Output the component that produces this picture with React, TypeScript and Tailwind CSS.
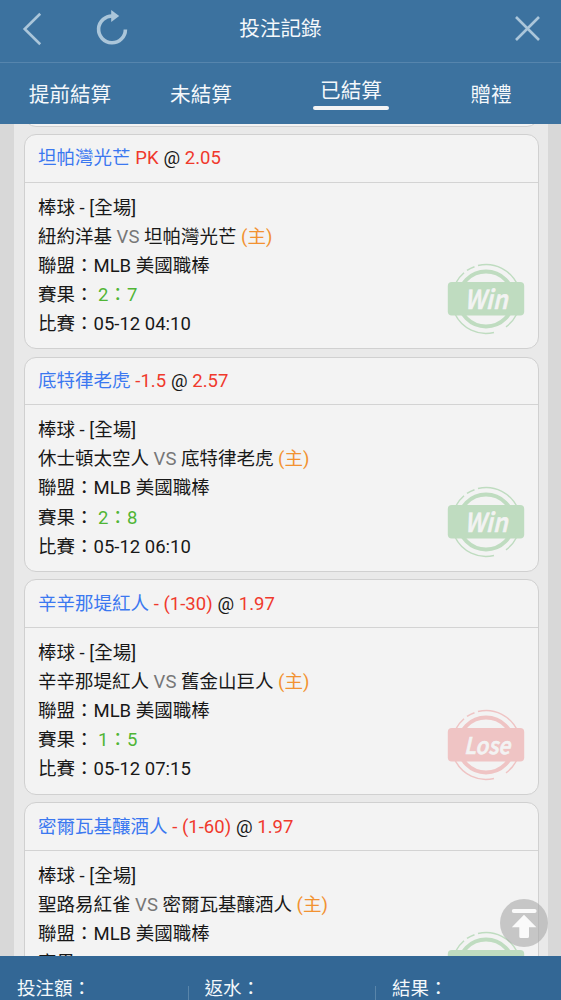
interface Bet {
  team: string;
  handicap: string;
  odds: string;
  away: string;
  home: string;
  score: string;
  time: string;
  result: "Win" | "Lose";
}

const bets: Bet[] = [
  {
    team: "坦帕灣光芒",
    handicap: "PK",
    odds: "2.05",
    away: "紐約洋基",
    home: "坦帕灣光芒",
    score: "2：7",
    time: "05-12 04:10",
    result: "Win",
  },
  {
    team: "底特律老虎",
    handicap: "-1.5",
    odds: "2.57",
    away: "休士頓太空人",
    home: "底特律老虎",
    score: "2：8",
    time: "05-12 06:10",
    result: "Win",
  },
  {
    team: "辛辛那堤紅人",
    handicap: "- (1-30)",
    odds: "1.97",
    away: "辛辛那堤紅人",
    home: "舊金山巨人",
    score: "1：5",
    time: "05-12 07:15",
    result: "Lose",
  },
  {
    team: "密爾瓦基釀酒人",
    handicap: "- (1-60)",
    odds: "1.97",
    away: "聖路易紅雀",
    home: "密爾瓦基釀酒人",
    score: "2：5",
    time: "05-12 07:40",
    result: "Win",
  },
];

const tabs = [
  { label: "提前結算", width: "w-[140px]" },
  { label: "未結算", width: "w-[122px]" },
  { label: "已結算", width: "w-[178px]" },
  { label: "贈禮", width: "w-[102px]" },
];

function Stamp({ result }: { result: Bet["result"] }) {
  const win = result === "Win";
  return (
    <svg
      width="78"
      height="72"
      viewBox="0 0 78 72"
      className={`absolute right-[13.5px] bottom-[13px] ${win ? "text-[#bfdcc0]" : "text-[#efc4c4]"}`}
    >
      <g fill="none" stroke="currentColor">
        <circle cx="39" cy="36" r="27.5" strokeWidth="4" />
        <g strokeWidth="1.5">
          <path d="M31 2.6A34.3 34.3 0 0 1 71 23" />
          <path d="M20 7.4A34.3 34.3 0 0 1 27.5 3.7" />
          <path d="M8.5 20.5A34.3 34.3 0 0 1 17 9.7" />
          <path d="M8 51A34.3 34.3 0 0 0 47 69.4" />
          <path d="M59 63.9A34.3 34.3 0 0 0 69.5 51.5" />
        </g>
      </g>
      <rect x="0.8" y="19" width="76.4" height="33.6" rx="4" fill="currentColor" />
      <text
        x={win ? 17.5 : 17}
        y={win ? 46 : 44.5}
        textLength={win ? 43 : 46}
        lengthAdjust="spacingAndGlyphs"
        className={`fill-[#f3f3f3] stroke-[#f3f3f3] stroke-[0.7px] font-['Noto_Sans_CJK_TC',sans-serif] font-medium italic ${win ? "text-[26px]" : "text-[23px]"}`}
      >
        {result}
      </text>
    </svg>
  );
}

function BetCard({ bet }: { bet: Bet }) {
  return (
    <div className="relative h-[215.2px] shrink-0 rounded-[12px] border border-[#d0d0d0] bg-[#f3f3f3]">
      <div className="flex h-[47.5px] items-center gap-[4.8px] border-b border-[#d3d3d3] pt-[2px] pl-[13.5px] whitespace-nowrap">
        <span className="text-[#3b78f0]">{bet.team}</span>
        <span className="text-[#f0392c]">{bet.handicap}</span>
        <span>@</span>
        <span className="text-[#f0392c]">{bet.odds}</span>
      </div>
      <div className="pt-[11px] pl-[13.5px] leading-[29.1px] whitespace-nowrap">
        <p>棒球 - [全場]</p>
        <p>
          {bet.away} <span className="text-[#777]">VS</span> {bet.home}{" "}
          <span className="text-[#f29231]">(主)</span>
        </p>
        <p>聯盟：MLB 美國職棒</p>
        <p>
          賽果： <span className="text-[#50b535]">{bet.score}</span>
        </p>
        <p>比賽：{bet.time}</p>
      </div>
      <Stamp result={bet.result} />
    </div>
  );
}

export default function App() {
  return (
    <div
      lang="zh-Hant"
      className="relative flex h-[1000px] w-[561px] flex-col overflow-hidden bg-[#d8d8d8] font-['Roboto','Noto_Sans_CJK_TC',sans-serif] text-[18.5px] text-[#181818]"
    >
      <header className="shrink-0 bg-[#3c729f] text-[20.6px] text-[#f4f8fb]">
        <div className="flex h-[63px] items-center justify-between border-b border-[#5685ad] pr-[20px] pb-[5px] pl-[22px]">
          <div className="flex w-[200px] items-center gap-[54px] text-[#abc6da]">
            <svg width="20" height="34" viewBox="0 0 20 34" fill="none" stroke="currentColor" strokeWidth="2.6">
              <path d="M18.2 1.8L2.7 17L18.2 32.2" />
            </svg>
            <svg width="33" height="36" viewBox="0 0 33 36" className="-mt-[2px]">
              <path
                d="M17 6A13.4 13.4 0 1 0 29.4 19.4"
                fill="none"
                stroke="currentColor"
                strokeWidth="3.6"
              />
              <path d="M15.2 0L23.2 6L15.2 12Z" fill="currentColor" />
            </svg>
          </div>
          <h1 className="-mb-[1px]">投注記錄</h1>
          <div className="flex w-[202px] justify-end text-[#abc6da]">
            <svg width="27" height="27" viewBox="0 0 27 27" fill="none" stroke="currentColor" strokeWidth="2.6">
              <path d="M2 2L25 25M25 2L2 25" />
            </svg>
          </div>
        </div>
        <nav className="flex h-[61px] items-start pt-[17px] leading-[30px]">
          {tabs.map(({ label, width }) => (
            <div key={label} className={`flex justify-center ${width}`}>
              {label === "已結算" ? (
                <span className="-mt-[4px] flex w-[76px] flex-col items-center">
                  <span>{label}</span>
                  <span className="h-[4px] w-full rounded-full bg-[#f4f4f4]" />
                </span>
              ) : (
                <span>{label}</span>
              )}
            </div>
          ))}
        </nav>
      </header>

      <main className="mr-[13px] ml-[14px] flex min-h-0 flex-1 flex-col gap-[7.5px] overflow-hidden bg-[#e9e9e9] pr-[9px] pl-[9.5px]">
        <div className="h-[2.6px] shrink-0 overflow-hidden">
          <div className="-mt-[22px] h-[24.6px] rounded-[12px] border border-[#d0d0d0] bg-[#f3f3f3]" />
        </div>
        {bets.map((bet) => (
          <BetCard key={bet.team} bet={bet} />
        ))}
      </main>

      <button className="absolute top-[898.5px] left-[500px] flex h-[48px] w-[48px] items-center justify-center rounded-full bg-[#a8a8a8]/60 text-[#fafafa]">
        <svg width="26" height="30" viewBox="0 0 26 30" fill="currentColor">
          <rect x="0.8" y="1" width="24.8" height="4" rx="2" />
          <path d="M13 6.8L25.4 19.3H18V28.5Q18 30 16.5 30H9.8Q8.3 30 8.3 28.5V19.3H0.8Z" />
        </svg>
      </button>

      <footer className="flex h-[44px] shrink-0 bg-[#336795] pt-[19px] leading-[28px] text-[#f4f8fb]">
        <div className="w-[188px] pl-[17px]">投注額：</div>
        <div className="mt-[11px] h-[14px] w-px bg-[#5985aa]" />
        <div className="w-[186px] pl-[15.5px]">返水：</div>
        <div className="mt-[11px] h-[14px] w-px bg-[#5985aa]" />
        <div className="flex-1 pl-[16px]">結果：</div>
      </footer>
    </div>
  );
}
